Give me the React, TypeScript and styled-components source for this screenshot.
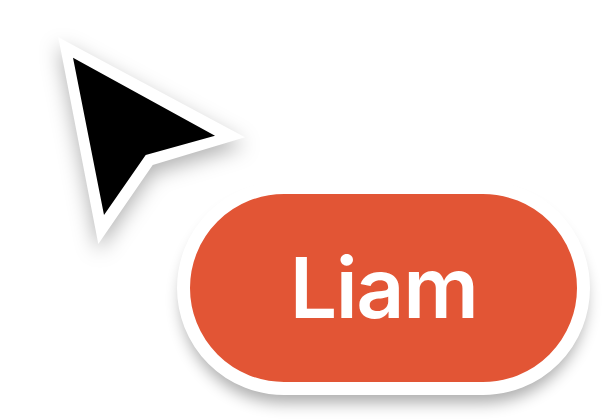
import React from 'react'
import styled, { createGlobalStyle } from 'styled-components'

const GlobalStyle = createGlobalStyle`
	html, body {
		margin: 0;
		padding: 0;
		background: #ffffff;
		overflow: hidden;
	}
`

const Stage = styled.div`
	position: relative;
	width: 602px;
	height: 419px;
	display: flex;
	justify-content: flex-end;
	align-items: flex-start;
	padding: 180.5px 12px 0 0;
	box-sizing: border-box;
	overflow: hidden;
`

const Pill = styled.div`
	width: 387px;
	height: 188.5px;
	display: flex;
	align-items: center;
	justify-content: center;
	background: #e25535;
	border: 13.5px solid #ffffff;
	border-radius: 108px;
	box-shadow: 0 12px 15px -4px rgba(0, 0, 0, 0.32);
	color: #ffffff;
	font-family: Inter, 'Liberation Sans', sans-serif;
	font-size: 84px;
	font-weight: 600;
	letter-spacing: -1.4px;
	line-height: 1;
`

const Cursor = styled.svg`
	position: absolute;
	left: 0;
	top: 0;
	filter: drop-shadow(0 8px 10px rgba(0, 0, 0, 0.3));
`

const App = () => {
	return (
		<>
			<GlobalStyle />
			<Stage>
				<Pill>Liam</Pill>
				<Cursor width='300' height='290' viewBox='0 0 300 290'>
					<path d='M58.3 37.3 L245 137.3 L152.7 165 L98.3 244 Z' fill='#ffffff' />
					<path d='M73 57.7 L215 135.7 L145.7 155 L104 215 Z' fill='#000000' />
				</Cursor>
			</Stage>
		</>
	)
}

export default App
